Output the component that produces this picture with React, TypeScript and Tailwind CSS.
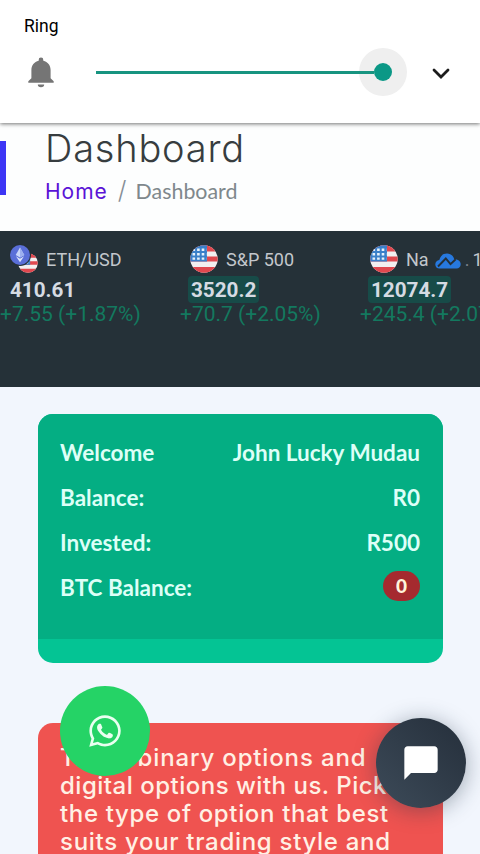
import { FaWhatsapp } from "react-icons/fa";
import { MdChatBubble } from "react-icons/md";

const account = [
  { label: "Welcome", value: "John Lucky Mudau" },
  { label: "Balance:", value: "R0" },
  { label: "Invested:", value: "R500" },
];

function FlagIcon({ className }: { className?: string }) {
  return (
    <svg viewBox="0 0 28 28" className={className}>
      <defs>
        <clipPath id="flag-round">
          <circle cx="14" cy="14" r="13.7" />
        </clipPath>
      </defs>
      <g clipPath="url(#flag-round)">
        <rect width="28" height="28" fill="#f3eff0" />
        <path d="M0 0h28v6.5H0zM0 11.5h28v5H0zM0 22h28v6H0z" fill="#e0484f" />
        <rect width="17" height="16.5" fill="#3a80c9" />
        <path
          d="M2.5 4.8h14M2.5 9.2h14M2.5 13.6h14"
          stroke="#e6f1fb"
          strokeWidth="2.4"
          strokeDasharray="2.6 2"
        />
      </g>
    </svg>
  );
}

function EthIcon() {
  return (
    <div className="relative w-7 h-7">
      <FlagIcon className="absolute right-0 bottom-0 w-5 h-5" />
      <svg viewBox="0 0 22 22" className="absolute -left-px -top-px w-[22px] h-[22px]">
        <circle cx="11" cy="11" r="11" fill="#253038" />
        <circle cx="11" cy="11" r="10" fill="#5a6fd8" />
        <path d="M11 3.5l4.3 7.4L11 13.4l-4.3-2.5z" fill="#c9d6fa" />
        <path d="M11 3.5v9.9l4.3-2.5z" fill="#9db0f0" />
        <path d="M6.9 12.2L11 14.7l4.1-2.5L11 18.2z" fill="#dce4fc" />
      </svg>
    </div>
  );
}

function BellIcon() {
  return (
    <svg viewBox="0 0 26 31" className="w-[26px] h-[31px] ml-1 mt-px" fill="#757575">
      <path d="M13 .5a2.300 2.300 0 0 1 2.300 2.400v.8C19.800 4.700 22.600 8.300 22.600 13v8.200l3.100 3.100v1.400H.300v-1.400l3.100-3.100V13c0-4.700 2.800-8.300 7.300-9.300v-.8A2.300 2.300 0 0 1 13 .5z" />
      <path d="M9.800 27.500h6.400a3.200 2.800 0 0 1-6.400 0z" />
    </svg>
  );
}

function CloudIcon() {
  return (
    <svg viewBox="0 0 26 16" className="w-[26px] h-4 mt-1 -ml-0.5 shrink-0">
      <path
        d="M4.500 15.500C2 15.500.3 13.600.3 11.400c0-2.300 1.700-4.200 4-4.400C5.300 3 8 .6 12 .6c3.600 0 6.200 2.100 7.200 5.400 3.700.1 6.500 2.200 6.500 5.200 0 2.600-1.700 4.300-4.200 4.300z"
        fill="#2779df"
      />
      <path
        d="M3 13.500l7.800-8 4.700 5.700 5.200-5"
        fill="none"
        stroke="#253038"
        strokeWidth="1.900"
      />
    </svg>
  );
}

function VolumePanel() {
  return (
    <header className="relative z-10 h-[123px] bg-white pl-6 pt-[15px] shadow-[0_1px_4px_rgba(0,0,0,0.55)]">
      <div className="font-['Roboto',sans-serif] text-[17.5px] leading-[22px] text-black">
        Ring
      </div>
      <div className="flex items-center h-[70px]">
        <BellIcon />
        <div className="flex items-center ml-[42px] w-[311px]">
          <div className="h-[3px] grow bg-[#179480]" />
          <div className="flex items-center w-12 h-12 rounded-full bg-[#efefef]">
            <div className="h-[3px] w-[15px] bg-[#179480]" />
            <div className="w-[18px] h-[18px] rounded-full bg-[#0b9886]" />
          </div>
        </div>
        <svg viewBox="0 0 18 12" className="w-[18px] h-3 ml-[25px] mt-1">
          <path d="M2 2l7 7 7-7" fill="none" stroke="#1c1c1c" strokeWidth="2.8" strokeLinecap="round" />
        </svg>
      </div>
    </header>
  );
}

function Ticker() {
  return (
    <section className="flex h-[156px] bg-[#253138] overflow-hidden font-['Roboto',sans-serif] whitespace-nowrap">
      <div className="w-[180px] shrink-0 pt-3.5">
        <div className="flex items-center h-7 pl-[10px] gap-2 text-[18px] text-[#c3c7cc]">
          <EthIcon />
          <span>ETH/USD</span>
        </div>
        <div className="h-[27px] pl-[7px] mt-[3px] text-[20.7px] leading-[28px] font-bold text-[#d5dbe3]">
          <span className="px-[3px]">410.61</span>
        </div>
        <div className="text-[21px] leading-[22px] text-[#13795f]">+7.55 (+1.87%)</div>
      </div>
      <div className="w-[180px] shrink-0 pt-3.5">
        <div className="flex items-center h-7 pl-[10px] gap-2 text-[18px] text-[#c3c7cc]">
          <FlagIcon className="w-7 h-7" />
          <span>S&amp;P 500</span>
        </div>
        <div className="flex h-[27px] pl-2 mt-[3px] text-[20.7px] leading-[28px] font-bold text-[#d5dbe3]">
          <span className="px-[3px] rounded-sm bg-[#174b48]">3520.2</span>
        </div>
        <div className="text-[21px] leading-[22px] text-[#13795f]">+70.7 (+2.05%)</div>
      </div>
      <div className="w-[120px] shrink-0 pt-3.5 overflow-hidden">
        <div className="flex items-center h-7 pl-[10px] gap-2 text-[18px] text-[#c3c7cc]">
          <FlagIcon className="w-7 h-7 shrink-0" />
          <span>Na</span>
          <CloudIcon />
          <span className="-ml-1 text-[#7b828a]">.</span>
          <span className="-ml-[5px]">100</span>
        </div>
        <div className="flex h-[27px] pl-2 mt-[3px] text-[20.7px] leading-[28px] font-bold text-[#d5dbe3]">
          <span className="px-[3px] rounded-sm bg-[#174b48]">12074.7</span>
        </div>
        <div className="text-[21px] leading-[22px] text-[#13795f]">+245.4 (+2.07%)</div>
      </div>
    </section>
  );
}

function AccountCard() {
  return (
    <section className="ml-[38px] w-[405px] rounded-[15px] overflow-hidden bg-[#04c494] font-['Lato',sans-serif] font-bold text-[#ddfff7]">
      <div className="h-[225px] bg-[#04ae83] pl-[22px] pr-[23px] pt-4">
        {account.map((row) => (
          <div key={row.label} className="flex justify-between h-[45px] text-[22.5px] leading-[45px]">
            <span>{row.label}</span>
            <span>{row.value}</span>
          </div>
        ))}
        <div className="flex justify-between h-[45px] text-[22.5px] leading-[45px]">
          <span>BTC Balance:</span>
          <span className="mt-[6px] w-[37px] h-[30px] rounded-full bg-[#a52a2f] text-[19px] leading-[30px] font-black text-center text-[#fff3dc]">
            0
          </span>
        </div>
      </div>
      <div className="h-6" />
    </section>
  );
}

export default function App() {
  return (
    <div className="relative w-[480px] h-[854px] overflow-hidden bg-[#f2f6fd]">
      <VolumePanel />
      <section className="flex h-[108px] bg-[#fdfefe]">
        <div className="w-1.5 h-[54px] mt-[18px] bg-[#3d36f5]" />
        <div className="pl-[39px] font-['Inter',sans-serif]">
          <h1 className="pt-[3px] text-[38px] leading-[44px] font-light tracking-[0.8px] text-[#373d3f]">
            Dashboard
          </h1>
          <nav className="flex items-center h-[42px] text-[21px]">
            <a className="pt-0.5 tracking-[1px] text-[#5a13d6]">Home</a>
            <span className="ml-[10px] text-[25px] font-light text-[#868e96]">/</span>
            <span className="ml-[9px] font-['Lato',sans-serif] text-[21.4px] text-[#7f888c]">Dashboard</span>
          </nav>
        </div>
      </section>
      <Ticker />
      <main className="pt-[27px]">
        <AccountCard />
        <section className="ml-[38px] mt-[60px] w-[405px] h-[200px] rounded-[15px] bg-[#ef5350] px-[22px] pt-[21px] font-['Inter',sans-serif] text-[24px] leading-[28px] font-medium whitespace-nowrap text-[#fff0e4]">
          <p className="tracking-[0.85px]">Trade binary options and</p>
          <p className="tracking-[0.5px]">digital options with us. Pick</p>
          <p className="tracking-[0.65px]">the type of option that best</p>
          <p className="tracking-[0.7px]">suits your trading style and</p>
        </section>
      </main>
      <button className="absolute left-[60px] top-[686px] flex items-center justify-center w-[90px] h-[90px] rounded-full bg-[#25d366] text-[#e9fff0]">
        <FaWhatsapp className="w-9 h-9" />
      </button>
      <button className="absolute left-[376px] top-[718px] flex items-center justify-center w-[90px] h-[90px] rounded-full bg-linear-to-tr from-[#3d4b59] to-[#252f3b] text-white shadow-[0_3px_22px_rgba(30,50,70,0.4)]">
        <MdChatBubble className="w-10 h-10" />
      </button>
    </div>
  );
}
